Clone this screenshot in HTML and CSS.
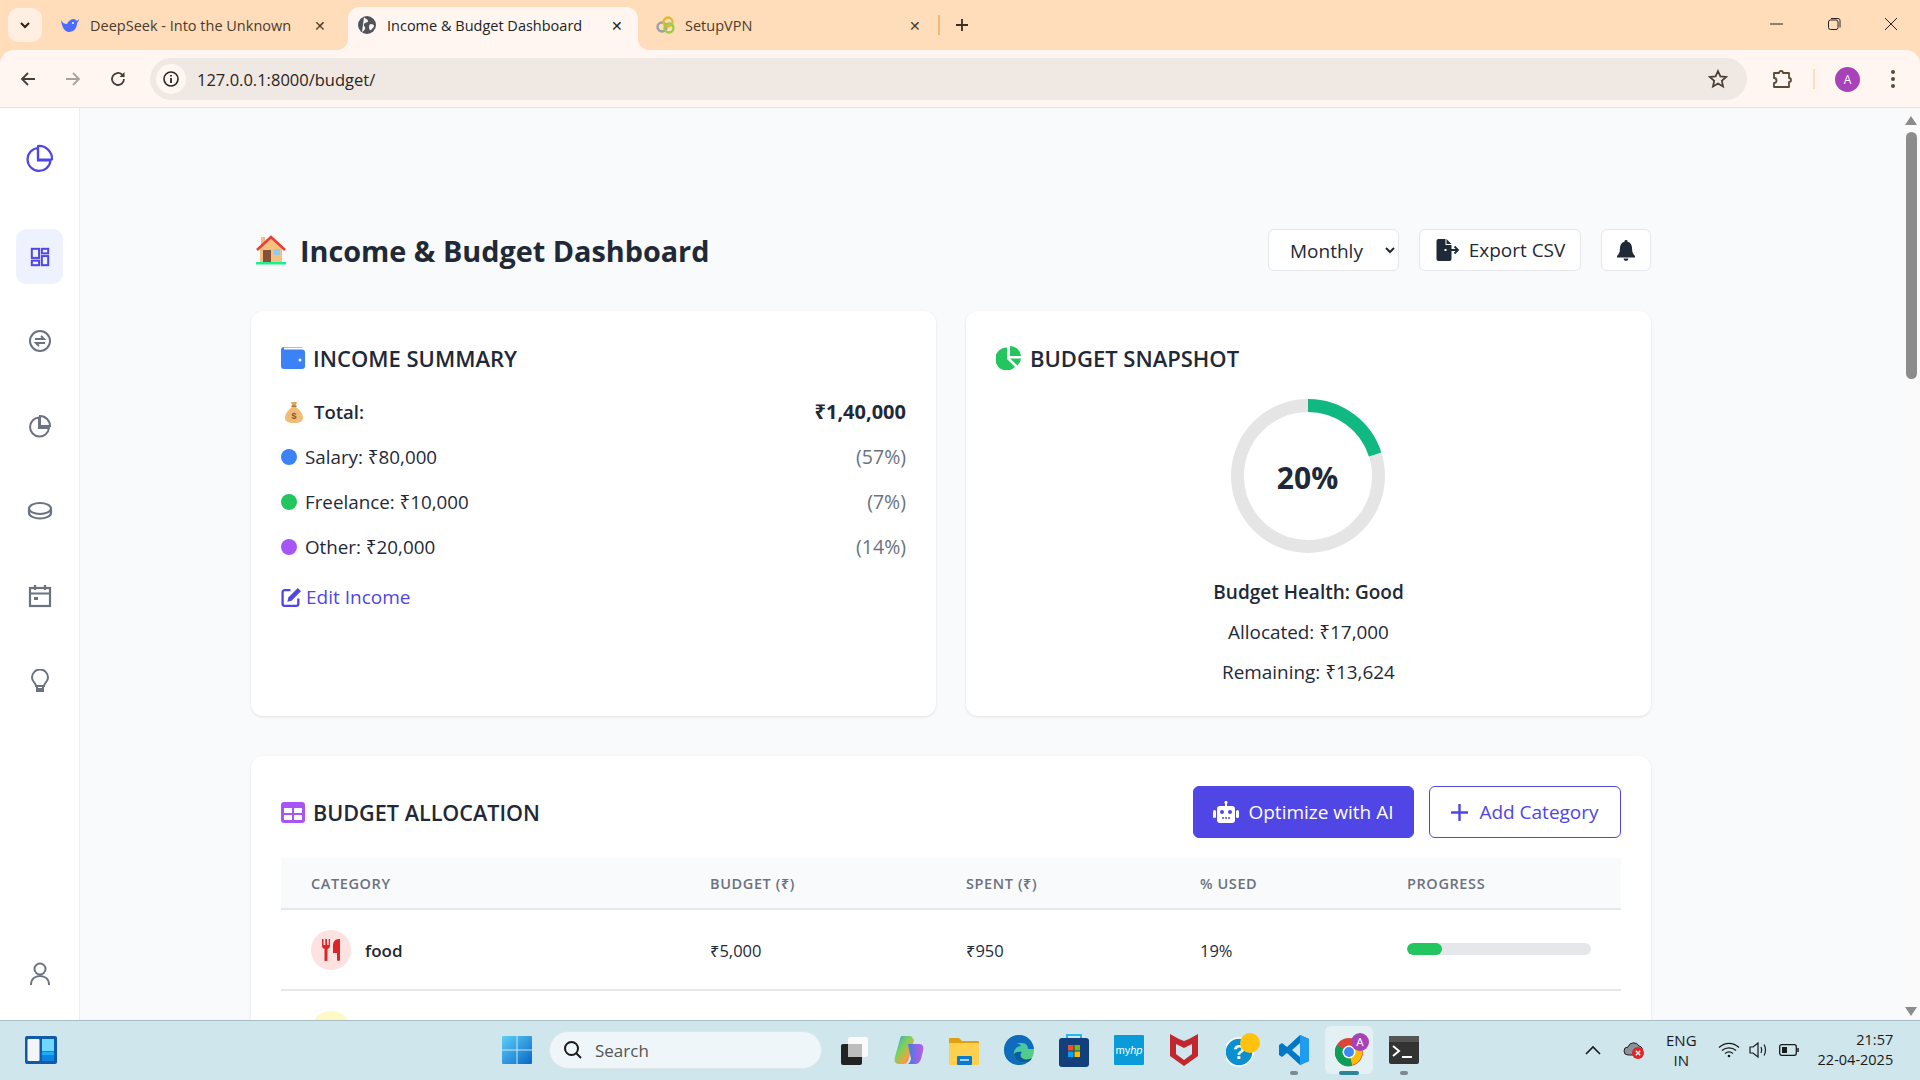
FILE: index.html
```html
<!DOCTYPE html>
<html>
<head>
    <meta charset="UTF-8">
    <title>Income &amp; Budget Dashboard</title>
    <link rel="stylesheet" href="styles.css">
</head>
<body>
<div class="window">

    <!-- browser tabs -->
    <div class="tabstrip">
        <div class="tab-search">
            <svg width="14" height="14" viewBox="0 0 14 14"><path d="M3 5l4 4 4-4" fill="none" stroke="#2b1f14" stroke-width="2"/></svg>
        </div>
        <div class="tab tab-first">
            <svg class="favicon" viewBox="0 0 20 20"><path d="M1 5c2 3 3 4 6 4 1-3 4-5 7-5 1 0 2 1 3 2l2-2c0 2-1 3-2 4 0 5-3 9-8 9-4 0-7-4-8-12z" fill="#4d6bfe"/><circle cx="13" cy="8" r="1" fill="#fff"/></svg>
            <span class="tab-title">DeepSeek - Into the Unknown</span>
            <span class="tab-close">✕</span>
        </div>
        <div class="tab tab-active">
            <svg class="favicon" viewBox="0 0 20 20"><circle cx="10" cy="10" r="9" fill="#50555c"/><path d="M7 2c1 2 4 2 4 4s-3 1-4 3 2 3 1 5-2 2-3 3M14 9c2 0 3 1 3 2s-2 3-3 4-2-1-2-3 1-3 2-3z" fill="#fff6f2"/></svg>
            <span class="tab-title">Income &amp; Budget Dashboard</span>
            <span class="tab-close">✕</span>
        </div>
        <div class="tab tab-last">
            <svg class="favicon" viewBox="0 0 20 20"><circle cx="7" cy="12" r="4.5" fill="none" stroke="#9aa0a6" stroke-width="2.4"/><circle cx="13" cy="7" r="4.5" fill="none" stroke="#e0b93a" stroke-width="2.4"/><circle cx="14" cy="13" r="4.5" fill="none" stroke="#9ccc45" stroke-width="2.4"/></svg>
            <span class="tab-title">SetupVPN</span>
            <span class="tab-close">✕</span>
        </div>
        <div class="tab-sep"></div>
        <svg class="tab-new" width="14" height="14" viewBox="0 0 14 14"><path d="M7 1v12M1 7h12" stroke="#3a2c20" stroke-width="1.8"/></svg>
        <div class="win-controls">
            <svg width="14" height="14" viewBox="0 0 14 14"><path d="M0 7h13" stroke="#222" stroke-width="1"/></svg>
            <svg width="14" height="14" viewBox="0 0 14 14"><rect x="1.5" y="3" width="9.5" height="9.5" rx="2" fill="none" stroke="#222"/><path d="M4 1.5h7a2 2 0 0 1 2 2v7" fill="none" stroke="#222"/></svg>
            <svg width="14" height="14" viewBox="0 0 14 14"><path d="M1 1l12 12M13 1L1 13" stroke="#222" stroke-width="1"/></svg>
        </div>
    </div>

    <!-- browser toolbar -->
    <div class="toolbar">
        <svg class="nav-btn" viewBox="0 0 18 18"><path d="M16 9H3M9 3L3 9l6 6" fill="none" stroke="#4a3d33" stroke-width="1.8"/></svg>
        <svg class="nav-btn" viewBox="0 0 18 18"><path d="M2 9h13M9 3l6 6-6 6" fill="none" stroke="#aaa19a" stroke-width="1.8"/></svg>
        <svg class="nav-btn" viewBox="0 0 18 18"><path d="M15 9a6 6 0 1 1-2-4.5L15 6.500" fill="none" stroke="#4a3d33" stroke-width="1.8"/><path d="M15.500 2v5h-5z" fill="#4a3d33"/></svg>
        <div class="omnibox">
            <div class="site-info">
                <svg width="18" height="18" viewBox="0 0 18 18"><circle cx="9" cy="9" r="7" fill="none" stroke="#2b2420" stroke-width="1.6"/><path d="M9 8v5M9 5v1.600" stroke="#2b2420" stroke-width="1.8"/></svg>
            </div>
            <span class="url">127.0.0.1:8000/budget/</span>
            <svg class="star" width="20" height="20" viewBox="0 0 20 20"><path d="M10 2l2.400 5.400 5.800.6-4.400 3.900 1.300 5.700-5.100-3-5.100 3 1.300-5.700L1.800 8l5.800-.6z" fill="none" stroke="#4a3d33" stroke-width="1.700"/></svg>
        </div>
        <svg class="ext-icon" width="22" height="22" viewBox="0 0 22 22"><path d="M3 5h5a2 2 0 1 1 4 0h6v5a2 2 0 1 1 0 4v5H3v-4a2.500 2.500 0 0 0 0-5z" fill="none" stroke="#5b4a38" stroke-width="1.800" stroke-linejoin="round"/></svg>
        <div class="toolbar-sep"></div>
        <div class="avatar">A</div>
        <svg class="menu-dots" width="6" height="20" viewBox="0 0 6 20"><circle cx="3" cy="3" r="2" fill="#5b4a38"/><circle cx="3" cy="10" r="2" fill="#5b4a38"/><circle cx="3" cy="17" r="2" fill="#5b4a38"/></svg>
    </div>

    <!-- page viewport -->
    <div class="viewport">
        <nav class="sidebar">
            <a class="side-logo">
                <svg width="30" height="30" viewBox="0 0 30 30" fill="none" stroke="#4f46e5" stroke-width="2.200"><path d="M13 5a11.500 11.500 0 1 0 12.500 12.500H13z"/><path d="M13 3a13 13 0 0 1 14 13.500H13z" stroke-linejoin="round"/></svg>
            </a>
            <a class="side-item side-active">
                <svg width="20" height="20" viewBox="0 0 22 22" fill="none" stroke="#4f46e5" stroke-width="2.200"><rect x="2" y="2" width="8" height="10"/><rect x="13" y="2" width="7" height="5"/><rect x="2" y="15" width="8" height="5"/><rect x="13" y="10" width="7" height="10"/></svg>
            </a>
            <a class="side-item">
                <svg width="24" height="24" viewBox="0 0 24 24" fill="none" stroke="#6b7280" stroke-width="2"><circle cx="12" cy="12" r="10"/><path d="M7 10h9l-3-3M17 14H8l3 3"/></svg>
            </a>
            <a class="side-item">
                <svg width="24" height="24" viewBox="0 0 24 24" fill="none" stroke="#6b7280" stroke-width="2"><path d="M11 3.500A9.500 9.500 0 1 0 21 14H11z"/><path d="M12 2a10 10 0 0 1 10 10H12z"/></svg>
            </a>
            <a class="side-item">
                <svg width="26" height="24" viewBox="0 0 26 24" fill="none" stroke="#6b7280" stroke-width="2.200"><ellipse cx="13" cy="9.500" rx="11" ry="5.500"/><path d="M2 10v4c0 3 5 5.500 11 5.500S24 17 24 14v-4"/></svg>
            </a>
            <a class="side-item">
                <svg width="24" height="24" viewBox="0 0 24 24" fill="none" stroke="#6b7280" stroke-width="2.200"><rect x="2" y="4" width="20" height="18"/><path d="M2 9.500h20M7 1v5M17 1v5"/><rect x="6" y="13" width="4" height="3" fill="#6b7280" stroke="none"/></svg>
            </a>
            <a class="side-item">
                <svg width="22" height="24" viewBox="0 0 22 24" fill="none" stroke="#6b7280" stroke-width="2"><path d="M7 17c0-3-4-4-4-8.500a8 8 0 0 1 16 0C19 13 15 14 15 17z"/><path d="M8 17v5h6v-5M8 20h6"/></svg>
            </a>
            <a class="side-item side-user">
                <svg width="24" height="26" viewBox="0 0 24 26" fill="none" stroke="#6b7280" stroke-width="2"><circle cx="12" cy="8" r="5.500"/><path d="M3 24c0-6 4-9 9-9s9 3 9 9"/></svg>
            </a>
        </nav>

        <main class="main">
            <header class="page-head">
                <h1 class="page-title">
                    <svg width="32" height="30" viewBox="0 0 32 30"><rect x="6" y="2" width="4" height="9" fill="#f4c27f"/><path d="M16 3L5 14v13h22V14z" fill="#f4c27f"/><path d="M2 15L16 2l14 13" fill="none" stroke="#ef3b36" stroke-width="2.600"/><rect x="8" y="15" width="8" height="12" fill="#85513a"/><rect x="19" y="14" width="6" height="6" rx="1" fill="#8ecbf5"/><rect x="1" y="27" width="30" height="2.500" fill="#1df08a"/></svg>
                    <span>Income &amp; Budget Dashboard</span>
                </h1>
                <div class="head-actions">
                    <select class="period-select">
                        <option>Monthly</option>
                    </select>
                    <button class="btn btn-plain">
                        <svg width="25" height="22" viewBox="0 0 24 22"><path d="M1 2a2 2 0 0 1 2-2h7v6h6v4H9v2h7v8a2 2 0 0 1-2 2H3a2 2 0 0 1-2-2z" fill="#1f2937"/><path d="M11 0l5 5h-5z" fill="#1f2937"/><path d="M11 11h11M19 7.500l3.500 3.500-3.500 3.500" fill="none" stroke="#1f2937" stroke-width="1.800"/></svg>
                        Export CSV
                    </button>
                    <button class="btn btn-plain btn-bell">
                        <svg width="18" height="21" viewBox="0 0 18 21"><path d="M9 0a1.500 1.500 0 0 1 1.500 1.700C13.500 2.400 15 5 15 8c0 4 1 6 3 8v1.500H0V16c2-2 3-4 3-8 0-3 1.500-5.600 4.500-6.300A1.500 1.500 0 0 1 9 0z" fill="#1f2937"/><path d="M6.500 18.500h5a2.500 2.500 0 0 1-5 0z" fill="#1f2937"/></svg>
                    </button>
                </div>
            </header>

            <section class="card-grid">
                <div class="card">
                    <h2 class="card-title">
                        <svg width="24" height="22" viewBox="0 0 24 22"><path d="M3 0h18a2 2 0 0 1 1 .5H3v2h18a3 3 0 0 1 3 3V19a3 3 0 0 1-3 3H3a3 3 0 0 1-3-3V3a3 3 0 0 1 3-3z" fill="#3b82f6"/><circle cx="19" cy="13" r="1.500" fill="#fff"/></svg>
                        INCOME SUMMARY
                    </h2>
                    <div class="income-row income-total">
                        <span class="income-label">
                            <svg width="20" height="22" viewBox="0 0 20 22"><path d="M7 1h6l-1.500 4h-3z" fill="#e0a45c"/><path d="M8 6h4c4 3 7 7 7 11 0 3-3 5-9 5s-9-2-9-5c0-4 3-8 7-11z" fill="#f2bb78"/><rect x="7.500" y="4.500" width="5" height="1.500" fill="#a8743a"/><text x="10" y="18" font-size="9" text-anchor="middle" fill="#8a5a22" font-family="Liberation Sans">$</text></svg>
                            Total:
                        </span>
                        <span class="income-amount">₹1,40,000</span>
                    </div>
                    <div class="income-row">
                        <span class="income-label"><i class="dot dot-blue"></i>Salary: ₹80,000</span>
                        <span class="income-pct">(57%)</span>
                    </div>
                    <div class="income-row">
                        <span class="income-label"><i class="dot dot-green"></i>Freelance: ₹10,000</span>
                        <span class="income-pct">(7%)</span>
                    </div>
                    <div class="income-row">
                        <span class="income-label"><i class="dot dot-purple"></i>Other: ₹20,000</span>
                        <span class="income-pct">(14%)</span>
                    </div>
                    <a class="edit-link">
                        <svg width="21" height="21" viewBox="0 0 20 20" fill="none"><path d="M9 3H3.500A2 2 0 0 0 1.500 5v11a2 2 0 0 0 2 2h11a2 2 0 0 0 2-2v-5" stroke="#4f46e5" stroke-width="2.200"/><path d="M7 10l9-9 3 3-9 9-4 1z" fill="#4f46e5"/></svg>
                        Edit Income
                    </a>
                </div>

                <div class="card card-snapshot">
                    <h2 class="card-title">
                        <svg width="26" height="24" viewBox="0 0 26 24"><path d="M11 1.500V13l8 8a11.500 11.500 0 1 1-8-19.500z" fill="#22c55e"/><path d="M14 0a11 11 0 0 1 11 10H14z" fill="#22c55e"/><path d="M14 12.500h11a11 11 0 0 1-3.500 7z" fill="#22c55e"/></svg>
                        BUDGET SNAPSHOT
                    </h2>
                    <div class="donut">
                        <svg width="154" height="154" viewBox="0 0 154 154">
                            <circle cx="77" cy="77" r="70.500" fill="none" stroke="#e5e5e5" stroke-width="13"/>
                            <circle cx="77" cy="77" r="70.500" fill="none" stroke="#10b981" stroke-width="13" stroke-dasharray="88.600 354.400" transform="rotate(-90 77 77)"/>
                        </svg>
                        <span class="donut-value">20%</span>
                    </div>
                    <p class="snap-line snap-strong">Budget Health: Good</p>
                    <p class="snap-line">Allocated: ₹17,000</p>
                    <p class="snap-line">Remaining: ₹13,624</p>
                </div>
            </section>

            <section class="card card-alloc">
                <div class="alloc-head">
                    <h2 class="card-title card-title-flat">
                        <svg width="24" height="21" viewBox="0 0 24 21"><rect width="24" height="21" rx="3" fill="#a855f7"/><rect x="3" y="6" width="8" height="5" fill="#fff"/><rect x="13" y="6" width="8" height="5" fill="#fff"/><rect x="3" y="13" width="8" height="5" fill="#fff"/><rect x="13" y="13" width="8" height="5" fill="#fff"/></svg>
                        BUDGET ALLOCATION
                    </h2>
                    <div class="alloc-actions">
                        <button class="btn btn-primary">
                            <svg width="26" height="22" viewBox="0 0 26 22"><path d="M13 0a1.500 1.500 0 0 1 1 2.700V5h5a3 3 0 0 1 3 3v11a3 3 0 0 1-3 3H7a3 3 0 0 1-3-3V8a3 3 0 0 1 3-3h5V2.700A1.500 1.500 0 0 1 13 0z" fill="#fff"/><rect x="0" y="9" width="3" height="8" rx="1.500" fill="#fff"/><rect x="23" y="9" width="3" height="8" rx="1.500" fill="#fff"/><circle cx="9" cy="11" r="2" fill="#4f46e5"/><circle cx="17" cy="11" r="2" fill="#4f46e5"/><path d="M9 17h8" stroke="#4f46e5" stroke-width="1.500" stroke-dasharray="2 1"/></svg>
                            Optimize with AI
                        </button>
                        <button class="btn btn-outline">
                            <svg width="17" height="17" viewBox="0 0 17 17"><path d="M8.500 0v17M0 8.500h17" stroke="#4f46e5" stroke-width="2.400"/></svg>
                            Add Category
                        </button>
                    </div>
                </div>
                <table class="alloc-table">
                    <thead>
                        <tr>
                            <th class="col-cat">CATEGORY</th>
                            <th class="col-budget">BUDGET (₹)</th>
                            <th class="col-spent">SPENT (₹)</th>
                            <th class="col-used">% USED</th>
                            <th>PROGRESS</th>
                        </tr>
                    </thead>
                    <tbody>
                        <tr>
                            <td>
                                <div class="cat-cell">
                                    <span class="cat-icon cat-red">
                                        <svg width="20" height="22" viewBox="0 0 20 22"><path d="M1 0v7a3 3 0 0 0 2.500 3V21a1.500 1.500 0 0 0 3 0V10A3 3 0 0 0 9 7V0H7.700v6H6V0H4.300v6H2.500V0z" fill="#dc2626"/><path d="M12 14V6c0-3 2-6 6-6h1v20.500a1.500 1.500 0 0 1-3 0V14z" fill="#dc2626"/></svg>
                                    </span>
                                    food
                                </div>
                            </td>
                            <td>₹5,000</td>
                            <td>₹950</td>
                            <td>19%</td>
                            <td>
                                <div class="progress"><div class="progress-fill" style="width: 19%"></div></div>
                            </td>
                        </tr>
                        <tr>
                            <td>
                                <div class="cat-cell"><span class="cat-icon cat-yellow"></span></div>
                            </td>
                            <td></td><td></td><td></td><td></td>
                        </tr>
                    </tbody>
                </table>
            </section>
        </main>

        <div class="scrollbar">
            <svg width="12" height="9" viewBox="0 0 12 9"><path d="M6 0l6 9H0z" fill="#8c8c8c"/></svg>
            <div class="scroll-thumb"></div>
            <svg class="scroll-down" width="12" height="9" viewBox="0 0 12 9"><path d="M6 9l6-9H0z" fill="#8c8c8c"/></svg>
        </div>
    </div>

    <!-- windows taskbar -->
    <footer class="taskbar">
        <svg class="widgets" width="32" height="28" viewBox="0 0 32 28"><rect width="32" height="28" rx="2" fill="#0f5ba8"/><rect x="2.500" y="3" width="12" height="22" rx="1" fill="#f4f4f4"/><rect x="17" y="3" width="12" height="12" fill="#6fd8ff"/><rect x="17" y="15.500" width="12" height="4" fill="#22aaf5"/><rect x="17" y="20" width="12" height="5" fill="#0a84e0"/></svg>
        <svg class="win-logo" width="30" height="30" viewBox="0 0 30 30"><defs><linearGradient id="wl" x1="0" y1="0" x2="1" y2="1"><stop offset="0" stop-color="#5ed0f7"/><stop offset="1" stop-color="#0667c9"/></linearGradient></defs><path d="M1 1h13.500v13.500H0V2a1 1 0 0 1 1-1zM15.500 1H29a1 1 0 0 1 1 1v12.500H15.500zM0 15.500h14.500V29H1a1 1 0 0 1-1-1zM15.500 15.500H30V28a1 1 0 0 1-1 1H15.500z" fill="url(#wl)"/></svg>
        <div class="task-search">
            <svg width="20" height="20" viewBox="0 0 20 20" fill="none" stroke="#1a1a1a" stroke-width="2"><circle cx="8.500" cy="8.500" r="6.500"/><path d="M13 13l5 5"/></svg>
            <span>Search</span>
        </div>
        <div class="task-apps">
            <span class="task-app">
                <svg width="30" height="30" viewBox="0 0 30 30"><rect x="2" y="9" width="21" height="21" rx="2" fill="#222"/><rect x="9" y="2" width="20" height="20" rx="2" fill="#fafafa"/><rect x="9" y="9" width="14" height="13" fill="#bdbdbd"/></svg>
            </span>
            <span class="task-app">
                <svg width="30" height="32" viewBox="0 0 30 32"><defs><linearGradient id="cp" x1="0" y1="0" x2="1" y2="1"><stop offset="0" stop-color="#2f9de8"/><stop offset=".4" stop-color="#7bd35a"/><stop offset=".7" stop-color="#f6a13c"/><stop offset="1" stop-color="#e0479e"/></linearGradient><linearGradient id="cp2" x1="0" y1="0" x2="1" y2="0"><stop offset="0" stop-color="#3a7fe8"/><stop offset="1" stop-color="#c05ae0"/></linearGradient></defs><path d="M8 2h9l3 4-5 18c-1 4-3 6-6 6H5C1 30 0 27 1 23L6 5c.4-2 1-3 2-3z" fill="url(#cp)"/><path d="M14 10h11c4 0 5 3 4 7l-2 8c-1 3-3 5-6 5h-8c2 0 3-2 4-5z" fill="url(#cp2)"/></svg>
            </span>
            <span class="task-app">
                <svg width="30" height="30" viewBox="0 0 30 30"><path d="M0 4a1 1 0 0 1 1-1h9l3 3h16a1 1 0 0 1 1 1v4H0z" fill="#e0a010"/><rect y="8" width="30" height="22" rx="1" fill="#ffd04d"/><rect x="8" y="21" width="15" height="9" rx="1" fill="#0f78c8"/><rect x="11" y="24" width="9" height="2" fill="#9ad6f7"/></svg>
            </span>
            <span class="task-app">
                <svg width="30" height="30" viewBox="0 0 30 30"><defs><linearGradient id="ed" x1="0" y1="0" x2="1" y2="1"><stop offset="0" stop-color="#35c1d8"/><stop offset="1" stop-color="#5ed06a"/></linearGradient></defs><circle cx="15" cy="15" r="15" fill="url(#ed)"/><path d="M15 0C6 0 0 7 0 15c0 9 7 15 15 15 4 0 7-1 9-3-6 2-13-1-14-7-1-5 3-9 7-9-1-2-3-3-6-2 2-1 4-1 7-1C22 8 24 11 24 14h6C29 6 23 0 15 0z" fill="#0f6cbd"/><path d="M10 20c1 6 8 9 14 7 2-1 3-2 4-4-4 2-9 2-11-1-1-2 0-4 1-5-3-1-8 0-8 3z" fill="#0c5aa0"/></svg>
            </span>
            <span class="task-app">
                <svg width="30" height="34" viewBox="0 0 30 34"><path d="M8 6V2h14v4" fill="none" stroke="#27b7ee" stroke-width="2"/><rect y="5" width="30" height="29" rx="3" fill="#12407c"/><rect x="9" y="12" width="5.500" height="5.500" fill="#f25022"/><rect x="15.500" y="12" width="5.500" height="5.500" fill="#7fba00"/><rect x="9" y="18.500" width="5.500" height="5.500" fill="#00a4ef"/><rect x="15.500" y="18.500" width="5.500" height="5.500" fill="#ffb900"/></svg>
            </span>
            <span class="task-app">
                <svg width="30" height="30" viewBox="0 0 30 30"><rect width="30" height="30" rx="1" fill="#0a9cd8"/><text x="15" y="19" font-size="11" fill="#fff" text-anchor="middle" font-family="Liberation Sans">my<tspan font-style="italic">hp</tspan></text></svg>
            </span>
            <span class="task-app">
                <svg width="28" height="32" viewBox="0 0 28 32"><path d="M0 0l9 5 5 2 5-2 9-5v22l-14 10L0 22z" fill="#c1272d"/><path d="M6 10l8 4 8-4v10l-8 6-8-6z" fill="#cee6ec"/></svg>
            </span>
            <span class="task-app task-help">
                <svg width="34" height="34" viewBox="0 0 34 34"><circle cx="13" cy="19" r="14" fill="#0a8fd0" stroke="#fff" stroke-width="1.500"/><text x="13" y="26" font-size="20" font-weight="700" fill="#fff" text-anchor="middle" font-family="Liberation Sans">?</text><circle cx="24" cy="10" r="10" fill="#ffc20e"/></svg>
            </span>
            <span class="task-app task-open">
                <svg width="30" height="30" viewBox="0 0 30 30"><path d="M21 0l9 4v22l-9 4L8 18l-5 4-3-2v-10l3-2 5 4z" fill="#0078c8"/><path d="M21 0l9 4v22l-9 4z" fill="#1f9cf0"/><path d="M21 8l-8 7 8 7z" fill="#cee6ec"/></svg>
            </span>
            <span class="task-app task-current">
                <svg width="34" height="34" viewBox="0 0 34 34"><circle cx="14" cy="19" r="14" fill="#db4437"/><path d="M14 19L26 12a14 14 0 0 1-9 20z" fill="#fbbc05"/><path d="M14 19L17 33A14 14 0 0 1 2 12z" fill="#0f9d58"/><circle cx="14" cy="19" r="6.500" fill="#fff"/><circle cx="14" cy="19" r="5" fill="#4285f4"/><circle cx="25" cy="9" r="9" fill="#a742b8"/><text x="25" y="13" font-size="11" fill="#fff" text-anchor="middle" font-family="Liberation Sans">A</text></svg>
            </span>
            <span class="task-app task-open">
                <svg width="30" height="28" viewBox="0 0 30 28"><rect width="30" height="28" rx="2" fill="#333"/><rect width="30" height="6" fill="#555"/><path d="M4 10l6 5-6 5" fill="none" stroke="#fff" stroke-width="2"/><path d="M13 21h10" stroke="#fff" stroke-width="2"/></svg>
            </span>
        </div>
        <div class="tray">
            <svg class="tray-caret" width="16" height="10" viewBox="0 0 16 10"><path d="M1 9l7-7 7 7" fill="none" stroke="#1a1a1a" stroke-width="1.600"/></svg>
            <svg class="tray-cloud" width="22" height="20" viewBox="0 0 22 20"><path d="M5 15a4 4 0 0 1 0-8 6 6 0 0 1 11-1 4 4 0 0 1 3 6l-8 3z" fill="#8a9398" stroke="#222" stroke-width="1"/><circle cx="15" cy="13" r="6" fill="#e0252b"/><path d="M12.800 10.800l4.400 4.400M17.200 10.800l-4.400 4.400" stroke="#fff" stroke-width="1.300"/></svg>
            <div class="tray-lang">ENG<br>IN</div>
            <svg class="tray-wifi" width="22" height="16" viewBox="0 0 22 16" fill="none" stroke="#1a1a1a" stroke-width="1.300"><path d="M1 5.500c6-5.500 14-5.500 20 0M4 8.500c4-3.500 10-3.500 14 0M7 11.500c2.500-2 5.500-2 8 0"/><circle cx="11" cy="14" r="1.300" fill="#1a1a1a" stroke="none"/></svg>
            <svg class="tray-volume" width="20" height="18" viewBox="0 0 20 18" fill="none" stroke="#1a1a1a" stroke-width="1.200"><path d="M1 6h3l5-4v14l-5-4H1z"/><path d="M12 6c1 2 1 4 0 6M15 3.500c2 3 2 8 0 11" /></svg>
            <svg width="20" height="12" viewBox="0 0 20 12"><rect x=".7" y=".7" width="16.600" height="10.600" rx="2" fill="none" stroke="#1a1a1a" stroke-width="1.300"/><rect x="3" y="3" width="5" height="6" fill="#1a1a1a"/><rect x="18.300" y="4" width="1.500" height="4" fill="#1a1a1a"/></svg>
            <div class="tray-clock">21:57<br>22-04-2025</div>
        </div>
    </footer>
</div>
</body>
</html>
```

FILE: styles.css
```css
* {
    box-sizing: border-box;
}

body {
    margin: 0;
    background-color: #f9fafb;
    font-family: 'Open Sans', 'Noto Sans', sans-serif;
    color: #1f2937;
}

.window {
    display: flex;
    flex-direction: column;
    height: 1080px;
    overflow: hidden;
    background-color: #ffddbb;
}

/* browser tabs */
.tabstrip {
    display: flex;
    align-items: flex-end;
    height: 50px;
    flex-shrink: 0;
    padding-left: 8px;
    font-size: 14.5px;
    color: #4a3b2c;
}

.tab-search {
    display: flex;
    align-items: center;
    justify-content: center;
    align-self: flex-start;
    width: 34px;
    height: 34px;
    margin-top: 8px;
    border-radius: 10px;
    background-color: #ffefe2;
}

.tab {
    display: flex;
    align-items: center;
    height: 43px;
    padding-bottom: 7px;
}

.tab-first {
    width: 306px;
    padding-left: 18px;
    padding-right: 22px;
}

.tab-active {
    position: relative;
    width: 290px;
    padding-left: 9px;
    padding-right: 15px;
    border-radius: 12px 12px 0 0;
    background-color: #fff6f2;
    color: #222;
}

/* the curves where the active tab meets the toolbar */
.tab-active::before,
.tab-active::after {
    content: "";
    position: absolute;
    bottom: 0;
    width: 12px;
    height: 12px;
}

.tab-active::before {
    left: -12px;
    background: radial-gradient(circle at 0 0, transparent 12px, #fff6f2 12.5px);
}

.tab-active::after {
    right: -12px;
    background: radial-gradient(circle at 100% 0, transparent 12px, #fff6f2 12.5px);
}

.tab-last {
    width: 298px;
    padding-left: 17px;
    padding-right: 15px;
}

.favicon {
    width: 20px;
    height: 20px;
    margin-right: 10px;
    flex-shrink: 0;
}

.tab-title {
    flex: 1;
    white-space: nowrap;
}

.tab-close {
    font-size: 14px;
}

.tab-sep {
    width: 2px;
    height: 20px;
    margin: 0 0 15px 2px;
    background-color: #f5b871;
}

.tab-new {
    margin: 0 0 18px 15px;
}

.win-controls {
    display: flex;
    gap: 43px;
    align-self: flex-start;
    margin: 17px 22px 0 auto;
}

/* browser toolbar */
.toolbar {
    display: flex;
    align-items: center;
    height: 58px;
    flex-shrink: 0;
    padding: 1px 0 0 19px;
    border-bottom: 1px solid #f5dfc9;
    border-radius: 14px 14px 0 0;
    background-color: #fff6f2;
}

.nav-btn {
    width: 18px;
    height: 18px;
    margin-right: 27px;
}

.omnibox {
    display: flex;
    align-items: center;
    width: 1597px;
    height: 42px;
    margin-left: -4px;
    padding-left: 6px;
    border-radius: 21px;
    background-color: #f0e8e3;
    font-size: 16.500px;
    color: #2b2420;
}

.site-info {
    display: flex;
    align-items: center;
    justify-content: center;
    width: 30px;
    height: 30px;
    margin-right: 11px;
    border-radius: 50%;
    background-color: #fff6f2;
}

.url {
    flex: 1;
}

.star {
    margin-right: 19px;
}

.ext-icon {
    margin-left: 24px;
}

.toolbar-sep {
    width: 2px;
    height: 20px;
    margin-left: 20px;
    background-color: #ffddbb;
}

.avatar {
    width: 25px;
    height: 25px;
    margin-left: 20px;
    border-radius: 50%;
    background-color: #a742b8;
    color: #fff;
    font-size: 12px;
    line-height: 25px;
    text-align: center;
}

.menu-dots {
    margin-left: 30px;
}

/* page */
.viewport {
    display: flex;
    flex: 1;
    min-height: 0;
    background-color: #f9fafb;
}

.sidebar {
    display: flex;
    flex-direction: column;
    align-items: center;
    width: 80px;
    flex-shrink: 0;
    border-right: 1px solid #eceef2;
    background-color: #fff;
}

.side-logo {
    display: flex;
    margin: 35px 0 56px;
}

.side-item {
    display: flex;
    align-items: center;
    justify-content: center;
    width: 47px;
    height: 55px;
    margin-bottom: 30px;
    border-radius: 10px;
}

.side-active {
    margin-bottom: 29px;
    background-color: #eef2ff;
}

.side-user {
    margin-top: auto;
    margin-bottom: 19px;
}

.main {
    flex: 1;
    padding: 121px 0 0 171px;
    overflow: hidden;
}

.page-head {
    display: flex;
    align-items: center;
    justify-content: space-between;
    width: 1400px;
    height: 42px;
    margin-bottom: 40px;
}

.page-title {
    display: flex;
    align-items: center;
    gap: 13px;
    margin: 0 0 0 4px;
    font-size: 28.800px;
    font-weight: 700;
}

.head-actions {
    display: flex;
    gap: 20px;
}

.period-select {
    width: 131px;
    height: 42px;
    padding: 2px 14px 0 17px;
    border: 1px solid #e5e7eb;
    border-radius: 6px;
    background-color: #fff;
    color: #1f2937;
    font-family: inherit;
    font-size: 19px;
}

.btn {
    display: flex;
    align-items: center;
    justify-content: center;
    border-radius: 6px;
    font-family: inherit;
    font-size: 19px;
    white-space: nowrap;
}

.btn-plain {
    gap: 9px;
    width: 162px;
    height: 42px;
    border: 1px solid #e5e7eb;
    background-color: #fff;
    color: #1f2937;
}

.btn-bell {
    width: 50px;
}

.btn-primary {
    gap: 9px;
    width: 221px;
    height: 52px;
    border: 1px solid #4f46e5;
    background-color: #4f46e5;
    color: #fff;
}

.btn-outline {
    gap: 11px;
    width: 192px;
    height: 52px;
    border: 1px solid #4f46e5;
    background-color: #fff;
    color: #4f46e5;
}

.card-grid {
    display: grid;
    grid-template-columns: 685px 685px;
    gap: 30px;
    width: 1400px;
    margin-bottom: 40px;
}

.card {
    padding: 30px 30px 24px;
    border-radius: 12px;
    background-color: #fff;
    box-shadow: 0 1px 3px rgba(0, 0, 0, 0.1);
}

.card-title {
    display: flex;
    align-items: center;
    gap: 8px;
    height: 36px;
    margin: 0 0 12px;
    padding-bottom: 2px;
    font-size: 22px;
    font-weight: 600;
}

.card-title-flat {
    margin: 0;
    padding-bottom: 0;
    font-size: 21.600px;
}

.income-row {
    display: flex;
    align-items: center;
    justify-content: space-between;
    height: 45px;
    font-size: 18.800px;
}

.income-total {
    font-weight: 600;
    font-size: 18.500px;
}

.income-amount {
    font-size: 20px;
    font-weight: 700;
}

.income-label {
    display: flex;
    align-items: center;
    gap: 8px;
}

.income-total svg {
    margin: 0 2px 0 3px;
}

.income-pct {
    color: #6b7280;
    font-size: 19.500px;
}

.dot {
    width: 16px;
    height: 16px;
    border-radius: 50%;
}

.dot-blue {
    background-color: #3b82f6;
}

.dot-green {
    background-color: #22c55e;
}

.dot-purple {
    background-color: #a855f7;
}

.edit-link {
    display: flex;
    align-items: center;
    gap: 4px;
    height: 34px;
    margin-top: 11px;
    color: #4f46e5;
    font-size: 19px;
}

.card-snapshot {
    text-align: center;
}

.donut {
    position: relative;
    width: 154px;
    height: 154px;
    margin: 22px auto 19px;
    left: -1px;
}

.donut-value {
    position: absolute;
    inset: 0;
    font-size: 30px;
    font-weight: 700;
    line-height: 158px;
}

.snap-line {
    margin: 0;
    font-size: 18.900px;
    line-height: 40px;
}

.snap-strong {
    font-size: 19px;
    font-weight: 600;
}

.card-alloc {
    width: 1400px;
}

.alloc-head {
    display: flex;
    align-items: center;
    justify-content: space-between;
    margin-bottom: 20px;
}

.alloc-actions {
    display: flex;
    gap: 15px;
}

.alloc-table {
    width: 1340px;
    border-collapse: collapse;
    table-layout: fixed;
    font-size: 16.500px;
}

.alloc-table th {
    height: 51px;
    padding: 0 30px;
    border-bottom: 2px solid #e5e7eb;
    background-color: #f9fafb;
    color: #6b7280;
    font-size: 14.500px;
    font-weight: 600;
    letter-spacing: 0.6px;
    text-align: left;
}

.alloc-table td {
    height: 81px;
    padding: 1px 30px 0;
    border-bottom: 2px solid #e5e7eb;
}

.col-cat {
    width: 399px;
}

.col-budget {
    width: 256px;
}

.col-spent {
    width: 234px;
}

.col-used {
    width: 207px;
}

.cat-cell {
    display: flex;
    align-items: center;
    gap: 14px;
    font-size: 17px;
    font-weight: 600;
}

.cat-icon {
    display: flex;
    align-items: center;
    justify-content: center;
    width: 40px;
    height: 40px;
    margin-top: -1px;
    border-radius: 50%;
}

.cat-red {
    background-color: #fee2e2;
}

.cat-yellow {
    background-color: #fef9c3;
}

.progress {
    height: 12px;
    margin-top: -3px;
    border-radius: 6px;
    background-color: #e5e7eb;
    overflow: hidden;
}

.progress-fill {
    height: 100%;
    border-radius: 6px;
    background-color: #22c55e;
}

.scrollbar {
    display: flex;
    flex-direction: column;
    align-items: center;
    width: 16px;
    flex-shrink: 0;
    padding: 8px 2px 4px 0;
    background-color: #fafafa;
}

.scroll-thumb {
    width: 11px;
    height: 247px;
    margin-top: 7px;
    flex-shrink: 0;
    border-radius: 6px;
    background-color: #8c8c8c;
}

.scroll-down {
    margin-top: auto;
}

/* windows taskbar */
.taskbar {
    display: flex;
    align-items: center;
    height: 60px;
    flex-shrink: 0;
    padding: 0 0 1px 25px;
    border-top: 1px solid #a9bec4;
    background-color: #cee6ec;
}

.win-logo {
    margin-left: 445px;
}

.task-search {
    display: flex;
    align-items: center;
    gap: 12px;
    width: 273px;
    height: 38px;
    margin-left: 17px;
    padding-left: 13px;
    border: 1px solid #dbe7ea;
    border-radius: 19px;
    background-color: #eef6f9;
    color: #555;
    font-size: 17px;
}

.task-apps {
    display: flex;
    margin-left: 4px;
}

.task-app {
    position: relative;
    display: flex;
    align-items: center;
    justify-content: center;
    width: 55px;
    height: 48px;
}

.task-help svg {
    margin-left: 8px;
}

.task-open::after,
.task-current::after {
    content: "";
    position: absolute;
    bottom: -1px;
    left: 24px;
    width: 8px;
    height: 4px;
    border-radius: 2px;
    background-color: #7c8a90;
}

.task-current {
    width: 48px;
    margin: 0 3.500px;
    border-radius: 6px;
    background-color: #e3f1f5;
}

.task-current svg {
    margin-left: 7px;
}

.task-current::after {
    left: 14px;
    width: 20px;
    background-color: #2a8596;
}

.tray {
    display: flex;
    align-items: center;
    margin-left: 154px;
    font-size: 15px;
    color: #1a1a1a;
}

.tray > svg {
    margin-right: 11px;
}

.tray > .tray-caret {
    margin-right: 22px;
}

.tray > .tray-cloud {
    margin-right: 21px;
}

.tray > .tray-wifi {
    margin-right: 9px;
}

.tray > .tray-volume {
    margin-right: 10px;
}

.tray-lang {
    margin-right: 21px;
    line-height: 20px;
    text-align: center;
}

.tray-clock {
    margin-left: 8px;
    font-size: 14.500px;
    line-height: 20px;
    text-align: right;
}
```
